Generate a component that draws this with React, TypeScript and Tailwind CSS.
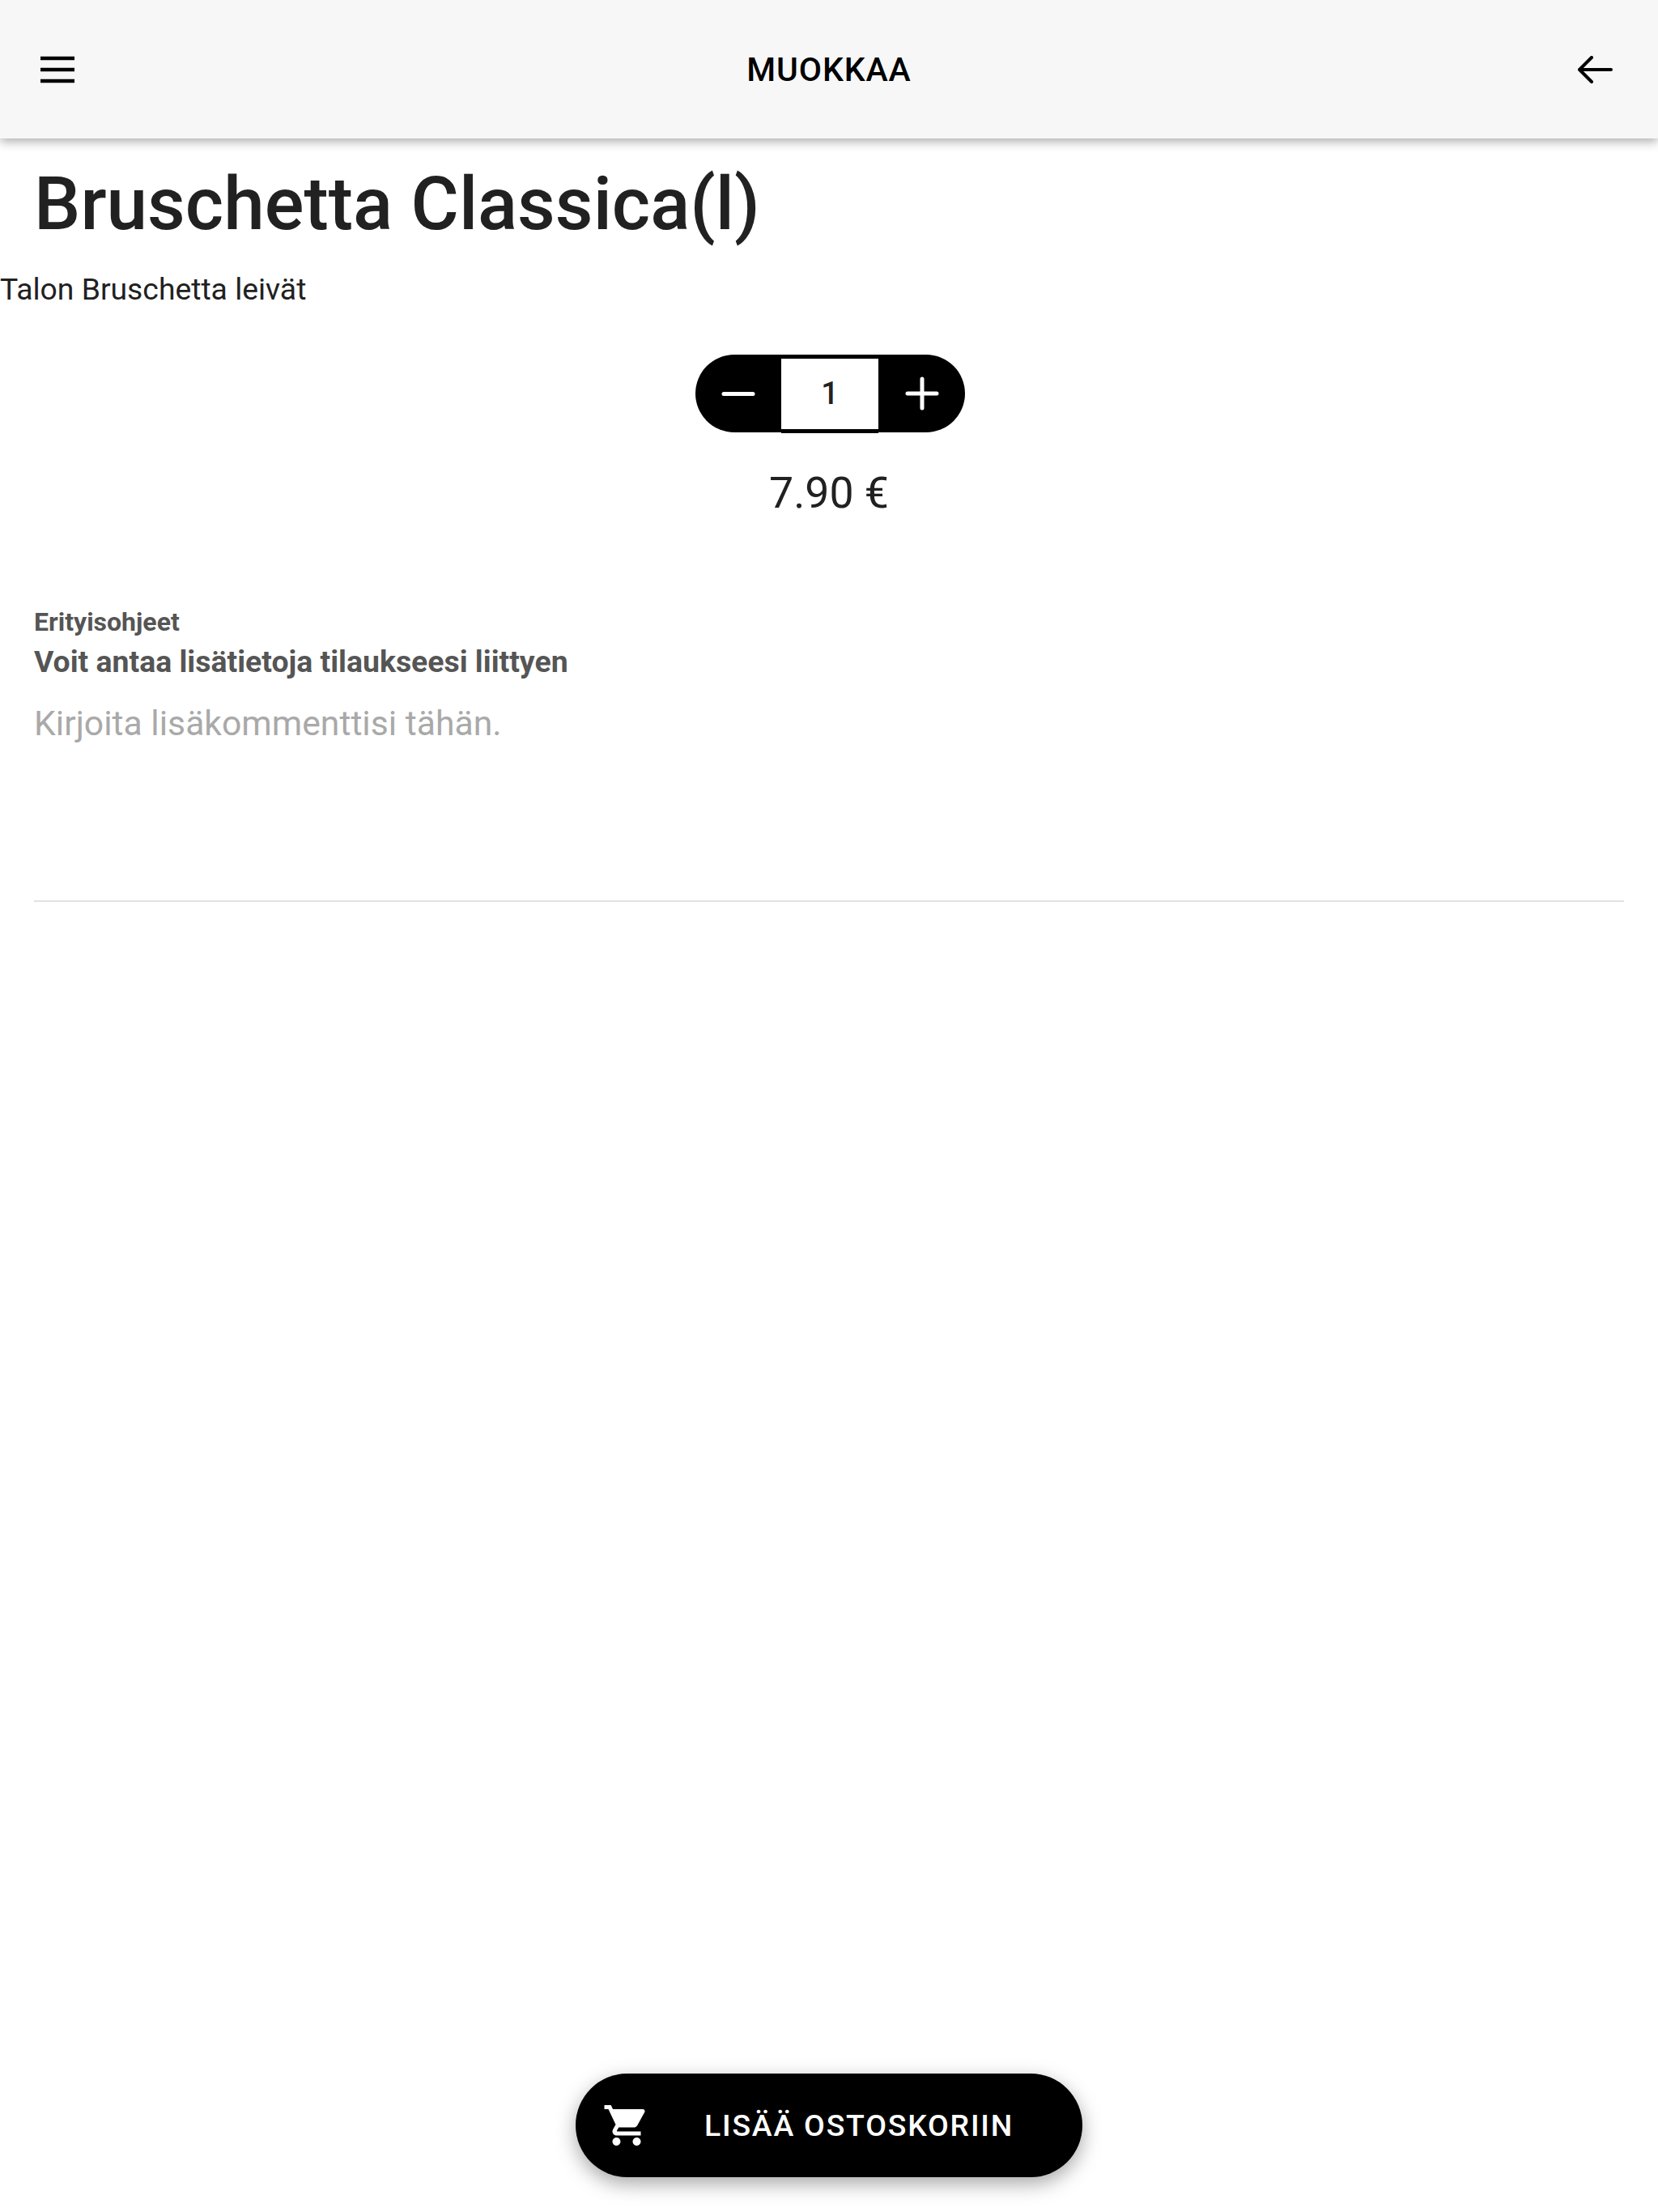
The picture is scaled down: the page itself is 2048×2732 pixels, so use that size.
import React from "react";
import { MdShoppingCart } from "react-icons/md";

export default function App() {
  return (
    <div className="relative h-[2732px] w-[2048px] overflow-hidden bg-white font-['Roboto',sans-serif]">
      <header className="grid h-[171px] grid-cols-[1fr_auto_1fr] items-center bg-[#f7f7f7] px-[49px] shadow-[0_4px_12px_rgba(0,0,0,0.32)]">
        <div className="flex justify-start">
          <svg width="44" height="34" viewBox="0 0 44 34" fill="none" stroke="#000" strokeWidth="4.5" aria-hidden="true">
            <path d="M1 3h42M1 17h42M1 31h42" />
          </svg>
        </div>
        <h1 className="text-[41px] leading-[48px] font-medium text-black tracking-[0.9px]">MUOKKAA</h1>
        <div className="flex justify-end pr-[7px]">
          <svg width="44" height="34" viewBox="0 0 44 34" fill="none" stroke="#000" strokeWidth="4" strokeLinecap="round" strokeLinejoin="round" aria-hidden="true">
            <path d="M42 17H3M18 2 3 17l15 15" />
          </svg>
        </div>
      </header>

      <h2 className="mt-[28px] pl-[42px] text-[90.9px] leading-[106px] font-medium text-[#212121]">Bruschetta Classica(l)</h2>
      <p className="mt-[30px] text-[37.3px] leading-[44px] text-[#212121]">Talon Bruschetta leivät</p>

      <div className="mt-[59px] flex justify-center">
        <div className="ml-[3px] flex h-[96px] w-[333px]">
          <div className="flex w-[106px] items-center justify-center rounded-l-[48px] bg-black">
            <svg width="42" height="5" viewBox="0 0 42 5" aria-hidden="true"><path d="M3 2.5h36" stroke="#fff" strokeWidth="5" strokeLinecap="round" /></svg>
          </div>
          <div className="flex h-[97px] flex-1 items-center justify-center border-y-[5px] border-black bg-white text-[38px] font-medium text-[#212121]">1</div>
          <div className="flex w-[107px] items-center justify-center rounded-r-[48px] bg-black">
            <svg width="42" height="42" viewBox="0 0 42 42" aria-hidden="true"><path d="M3 21h36M21 3v36" stroke="#fff" strokeWidth="5" strokeLinecap="round" /></svg>
          </div>
        </div>
      </div>

      <p className="mt-[43px] text-center text-[53.6px] leading-[64px] text-[#212121]">7.90 €</p>

      <section className="mx-[42px] mt-[109px] h-[364px] border-b-2 border-[#e2e2e2]">
        <p className="text-[32px] leading-[36px] font-bold text-[#555555]">Erityisohjeet</p>
        <p className="mt-[9px] text-[37.4px] leading-[44px] font-bold text-[#555555]">Voit antaa lisätietoja tilaukseesi liittyen</p>
        <p className="mt-[29px] text-[42.7px] leading-[50px] text-[#a9a9a9]">Kirjoita lisäkommenttisi tähän.</p>
      </section>

      <button className="absolute bottom-[43px] left-[711px] flex h-[128px] w-[626px] items-center rounded-full bg-black pl-[33px] text-white shadow-[0_8px_24px_rgba(0,0,0,0.35)]">
        <MdShoppingCart size={60} color="#fff" />
        <span className="ml-[66px] text-[37.4px] leading-[42px] font-medium tracking-[1.8px]">LISÄÄ OSTOSKORIIN</span>
      </button>
    </div>
  );
}
